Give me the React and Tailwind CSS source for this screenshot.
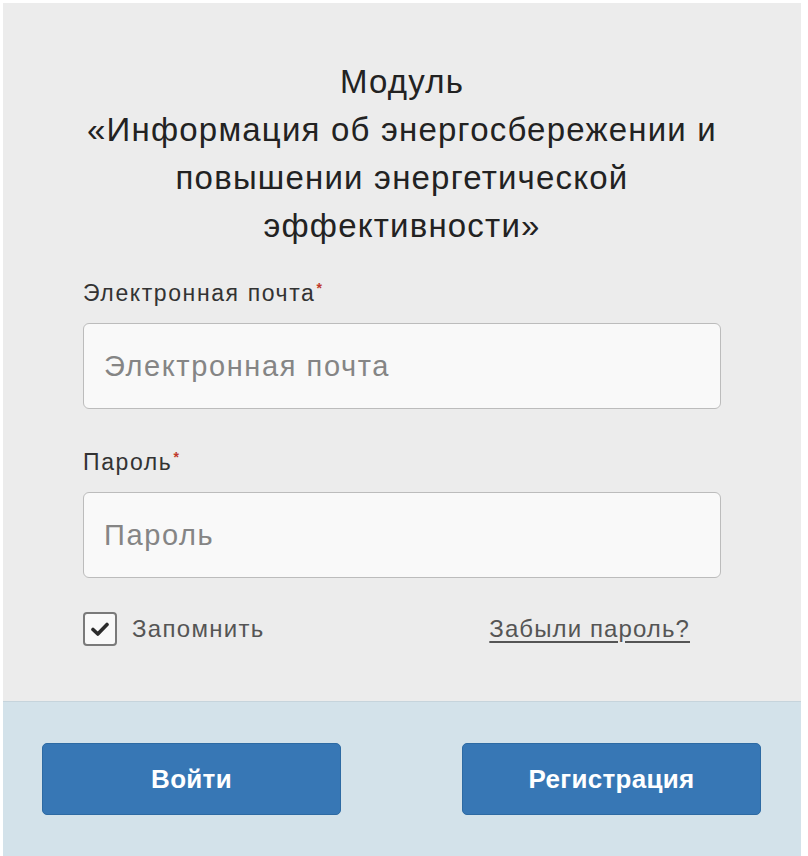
import React, { useState } from 'react';

const font = { fontFamily: '"Liberation Sans", Arial, sans-serif' };

const Required = () => (
  <span className="relative -top-[8px] ml-[1px] text-[14px] font-bold tracking-normal text-[#c0392b]">*</span>
);

const App = () => {
  const [remember, setRemember] = useState(true);

  return (
    <div className="w-[808px] h-[856px] bg-white pt-[3px] px-[3px]" style={font}>
      <div className="flex h-full w-[798px] flex-col bg-[#ececec]">
        <div className="flex-1 px-[80px] pt-[55px]">
          <h1 className="text-center text-[33px] leading-[48px] tracking-[1.2px] text-[#222]">
            Модуль
            <br />
            «Информация об энергосбережении и
            <br />
            повышении энергетической
            <br />
            эффективности»
          </h1>

          <form className="mt-[27px]">
            <label className="block text-[23px] leading-[32px] tracking-[1.6px] text-[#333]">
              Электронная почта<Required />
            </label>
            <input
              type="email"
              placeholder="Электронная почта"
              className="mt-[11px] block h-[86px] w-full rounded-[6px] border border-[#bcbcbc] bg-[#f9f9f9] px-[20px] text-[29px] tracking-[1.6px] text-[#333] placeholder:text-[#858585] outline-none"
            />

            <label className="mt-[37px] block text-[23px] leading-[32px] tracking-[1.6px] text-[#333]">
              Пароль<Required />
            </label>
            <input
              type="password"
              placeholder="Пароль"
              className="mt-[11px] block h-[86px] w-full rounded-[6px] border border-[#bcbcbc] bg-[#f9f9f9] px-[20px] text-[29px] tracking-[1.6px] text-[#333] placeholder:text-[#858585] outline-none"
            />

            <div className="mt-[33px] flex items-center justify-between">
              <label className="flex items-center gap-[15px] cursor-pointer">
                <span
                  onClick={() => setRemember(!remember)}
                  className="flex h-[34px] w-[34px] items-center justify-center rounded-[4px] border-2 border-[#7a7a7a] bg-[#f9f9f9]"
                >
                  {remember && (
                    <svg width="18" height="14" viewBox="0 0 18 14">
                      <path d="M2 7.5 L6.8 12 L16 2.5" fill="none" stroke="#2b2b2b" strokeWidth="3.6" strokeLinecap="round" strokeLinejoin="round" />
                    </svg>
                  )}
                </span>
                <span className="text-[24px] tracking-[1.3px] text-[#555]">Запомнить</span>
              </label>
              <a href="#" className="mr-[31px] text-[24px] tracking-[1.1px] text-[#555] underline underline-offset-[4px]">
                Забыли пароль?
              </a>
            </div>
          </form>
        </div>

        <div className="flex h-[155px] items-center justify-between border-t border-[#c6d4dc] bg-[#d3e2ea] pl-[39px] pr-[40px]">
          <button className="h-[72px] w-[299px] rounded-[5px] border border-[#2d6aa3] bg-[#3777b5] text-[26px] font-bold tracking-[0.3px] text-white">
            Войти
          </button>
          <button className="h-[72px] w-[299px] rounded-[5px] border border-[#2d6aa3] bg-[#3777b5] text-[26px] font-bold tracking-[0.3px] text-white">
            Регистрация
          </button>
        </div>
      </div>
    </div>
  );
};

export default App;
